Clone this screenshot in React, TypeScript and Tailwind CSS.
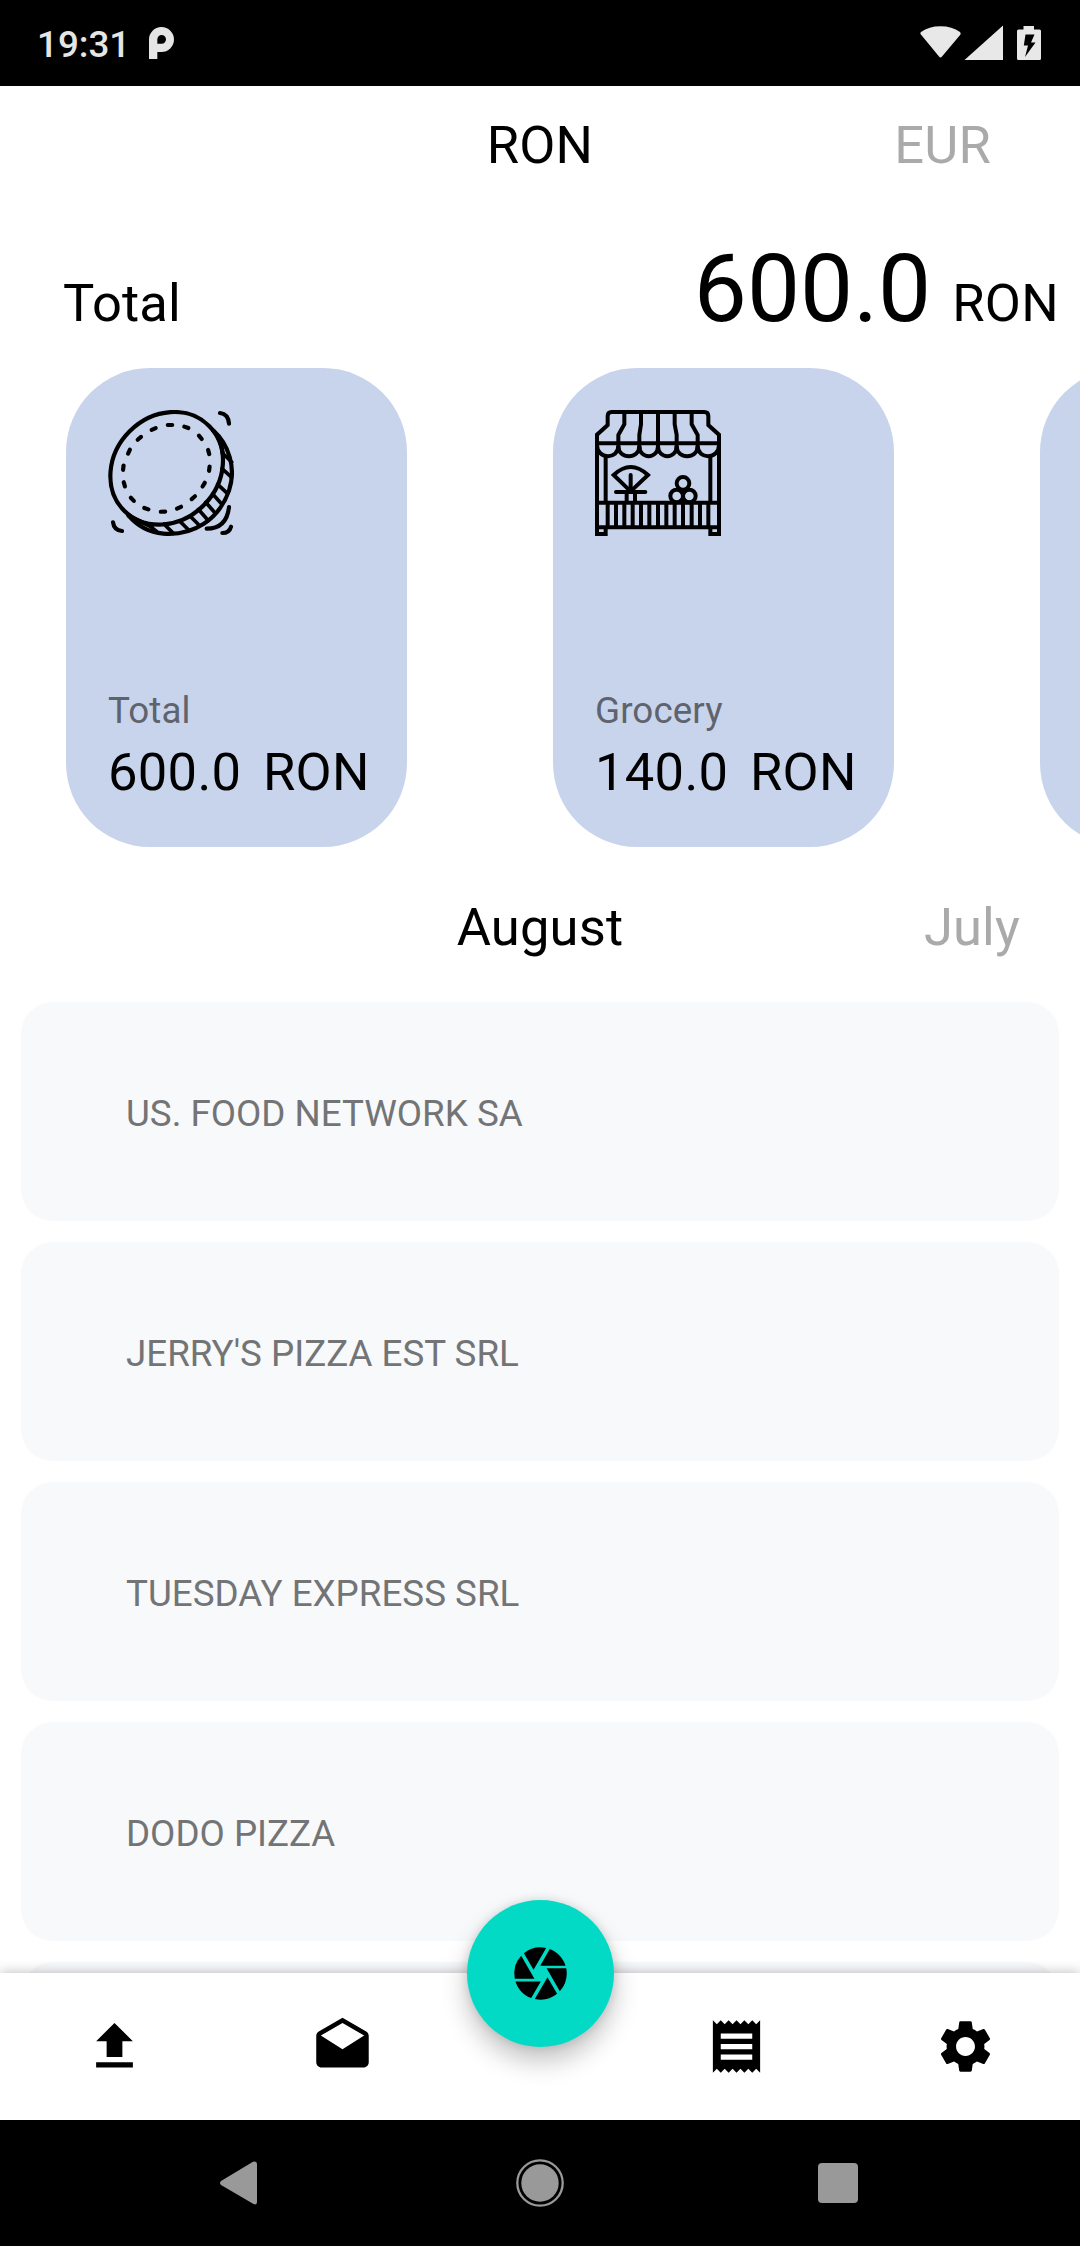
import React from "react";
import { MdCamera, MdDrafts, MdFileUpload, MdReceipt, MdSettings } from "react-icons/md";

const dashes = [
  [330, 195, 0], [379, 202, 20], [421, 232, 50], [446, 276, 74],
  [448, 326, 97], [431, 374, 121], [400, 413, 140], [357, 443, 156],
  [309, 455, 177], [259, 446, 20], [217, 418, 46], [193, 373, 74],
  [190, 323, 97], [207, 275, 115], [238, 235, 140], [281, 207, 157],
];

const slats = [83, 108, 133, 158, 183, 208, 234, 259, 284, 309, 335, 360, 385];

function CoinIcon() {
  return (
    <svg className="h-[126px] w-[126px]" viewBox="144 150 378 378" fill="none" stroke="#000" strokeWidth="12.5" strokeLinecap="round">
      <ellipse cx="320" cy="325" rx="180" ry="157" transform="rotate(-45 320 325)" />
      {dashes.map(([x, y, r]) => (
        <path key={`${x}-${y}`} d="M-6.5 0h13" transform={`translate(${x} ${y}) rotate(${r})`} />
      ))}
      <path d="M460 212C505 252 530 323 507 392C477 478 401 528 310 521C268 517 232 498 206 467" />
      <path d="M462 214C478 235 484 250 489 285M206 467C225 478 245 487 275 500" />
      <path strokeWidth="11" d="M490 282l25 24M486 326l29 26M473 373l29 27M458 402l27 30M437 427l25 28M415 448l25 28M390 468l24 24M360 484l26 26M312 492l28 28M256 488l34 26" />
      <path d="M480 159Q505 162 507 191M440 506Q500 506 507 441M487 519Q508 519 513 500M159 487Q162 511 186 513" />
    </svg>
  );
}

function StallIcon() {
  return (
    <svg className="h-[126px] w-[126px]" viewBox="45 60 378 378" fill="none" stroke="#000" strokeWidth="12">
      <path d="M51 438V134L83 105V78Q83 66 95 66H373Q385 66 385 78V105L417 134V438" />
      <path d="M51 160H417M51 338H417M51 412H417M51 432H77V412M417 432H391V412M77 196V338M391 196V338" />
      <path d="M133 66V103L115 135V178M183 66V103L178 135V178M234 66V178M284 66V103L290 135V178M335 66V103L353 135V178" />
      <path d="M51 165C51 209 115 209 115 168C115 209 178 209 178 168C178 209 234 209 234 168C234 209 290 209 290 168C290 209 353 209 353 168C353 209 417 209 417 165" />
      {slats.map((x) => (
        <path key={x} d={`M${x} 338V412`} />
      ))}
      <path d="M152 304L101 255Q152 207 204 255ZM140 306V338M165 306V338" />
      <path strokeLinecap="round" d="M152 255V304M108 306H196" />
      <circle cx="309" cy="280" r="19" />
      <circle cx="290" cy="318" r="19" />
      <circle cx="328" cy="318" r="19" />
    </svg>
  );
}

function StatusBar() {
  return (
    <div className="flex h-[86px] shrink-0 items-center justify-between bg-black pr-[39px] pl-[37px]">
      <div className="flex items-center gap-[19px]">
        <span className="pt-[2px] text-[36.75px] leading-[43px] font-medium text-[#e5e5e5]">19:31</span>
        <svg className="h-[32px] w-[25px]" viewBox="447 80 75 96" fill="#e5e5e5" fillRule="evenodd">
          <path d="M447 176V118a37.500 37.500 0 1 1 37 37h-12V176zM472 130V117a13 13 0 1 1 13 13z" />
        </svg>
      </div>
      <svg className="h-[36px] w-[121px]" viewBox="920 25 121 36" fill="#e8e8e8">
        <path d="M920.500 34Q920 33 921 32Q929 26.300 940.500 26.300T960 32Q961 33 960.500 34.500L942 56.500Q940.500 58.500 939 56.500Z" />
        <path d="M1003 25.500V60H964.500Z" />
        <path fillRule="evenodd" d="M1023.500 26H1034V29.500H1039.500Q1041 29.500 1041 31V58.500Q1041 60 1039.500 60H1018.500Q1017 60 1017 58.500V31Q1017 29.500 1018.500 29.500H1023.500ZM1025.500 34.500L1023.800 45.500H1028L1025 57L1035.500 42.500H1031L1034.500 34.500Z" />
      </svg>
    </div>
  );
}

function TabStrip({ current, next, className }: { current: string; next: string; className: string }) {
  return (
    <div className={`grid shrink-0 grid-cols-[1fr_auto_1fr] items-center text-[52.5px] leading-[62px] tracking-[0.15px] ${className}`}>
      <span />
      <span className="text-black">{current}</span>
      <span className="text-right text-[#aaaaaa]">{next}</span>
    </div>
  );
}

function CategoryCard({ icon, label, amount }: { icon?: React.ReactNode; label?: string; amount?: string }) {
  return (
    <div className="flex h-[479px] w-[341px] shrink-0 flex-col rounded-[84px] bg-[#c8d4ec] px-[42px] pt-[42px] pb-[44px] whitespace-nowrap">
      {icon}
      {amount && (
        <>
          <div className="mt-auto text-[36.75px] leading-[43px] tracking-[0.1px] text-[#5e636d]">{label}</div>
          <div className="mt-[9px] flex gap-[21.5px] text-[52.5px] leading-[62px] tracking-[0.3px] text-black">
            <span>{amount}</span>
            <span>RON</span>
          </div>
        </>
      )}
    </div>
  );
}

const merchants = ["US. FOOD NETWORK SA", "JERRY'S PIZZA EST SRL", "TUESDAY EXPRESS SRL", "DODO PIZZA", ""];

export default function App() {
  return (
    <div className="flex h-[2246px] w-[1080px] flex-col overflow-hidden bg-white font-['Roboto',sans-serif] text-black">
      <StatusBar />
      <TabStrip current="RON" next="EUR" className="h-[118px] px-[89px]" />

      <div className="flex h-[164px] shrink-0 items-baseline justify-between pt-[29px] pr-[21px] pl-[63px]">
        <span className="text-[52.5px] tracking-[0.15px]">Total</span>
        <div className="flex items-baseline gap-[21px]">
          <span className="text-[94.5px] leading-[111px]">600.0</span>
          <span className="text-[52.5px] tracking-[0.3px]">RON</span>
        </div>
      </div>

      <div className="flex shrink-0 gap-[146px] overflow-hidden pl-[66px]">
        <CategoryCard icon={<CoinIcon />} label="Total" amount="600.0" />
        <CategoryCard icon={<StallIcon />} label="Grocery" amount="140.0" />
        <CategoryCard />
      </div>

      <TabStrip current="August" next="July" className="h-[155px] px-[60px] pt-[4px]" />

      <div className="flex min-h-0 flex-1 flex-col gap-[21px] overflow-hidden px-[21px]">
        {merchants.map((name, i) => (
          <div key={i} className="flex h-[219px] shrink-0 items-center rounded-[32px] bg-[#f8f9fb] px-[105px] pt-[5px] text-[36.75px] text-[#737475]">
            {name}
          </div>
        ))}
      </div>

      <nav className="relative flex h-[147px] shrink-0 items-center justify-between bg-white px-[83px] shadow-[0_0_12px_rgba(0,0,0,0.28)]">
        <div className="flex gap-[165px]">
          <MdFileUpload className="h-[63px] w-[63px]" />
          <MdDrafts className="h-[63px] w-[63px]" />
        </div>
        <div className="flex gap-[166px]">
          <MdReceipt className="h-[63px] w-[63px]" />
          <MdSettings className="h-[63px] w-[63px]" />
        </div>
        <button className="absolute -top-[73px] left-[467px] flex h-[147px] w-[147px] items-center justify-center rounded-full bg-[#03dac5] shadow-[0_14px_26px_rgba(0,0,0,0.24),0_0_10px_rgba(0,0,0,0.12)]">
          <MdCamera className="h-[63px] w-[63px]" />
        </button>
      </nav>

      <div className="grid h-[126px] shrink-0 grid-cols-[1fr_48px_1fr] items-center bg-black">
        <svg className="ml-[220px] h-[44px] w-[38px]" viewBox="0 0 38 44" fill="#999">
          <path d="M1 20L33 .7Q37 -.5 37 3V41Q37 44.500 33.500 43L1 24Q-1 22 1 20Z" />
        </svg>
        <svg className="h-[48px] w-[48px]" viewBox="0 0 48 48" fill="#999">
          <circle cx="24" cy="24" r="18.700" />
          <circle cx="24" cy="24" r="22.700" fill="none" stroke="#999" strokeWidth="2.300" />
        </svg>
        <div className="ml-[254px] h-[40px] w-[40px] rounded-[4px] bg-[#999]" />
      </div>
    </div>
  );
}
